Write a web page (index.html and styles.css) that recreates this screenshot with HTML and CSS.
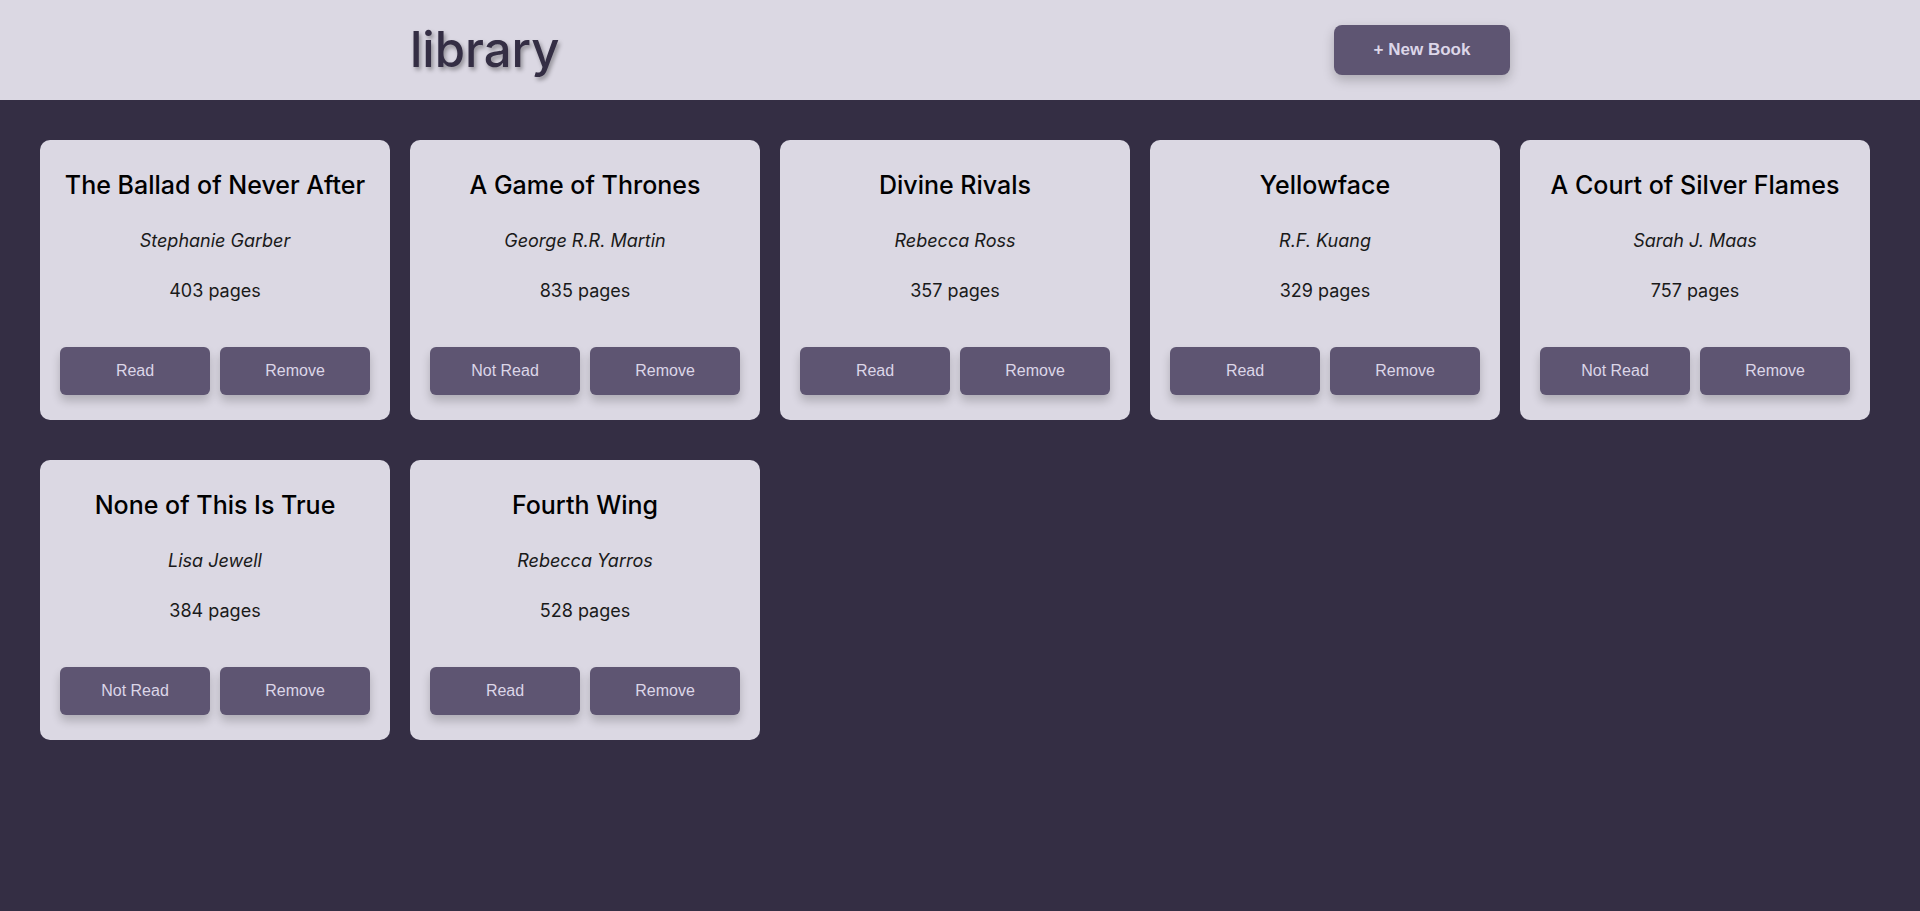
FILE: index.html
```html
<!DOCTYPE html>
<html lang="en">
<head>
<meta charset="utf-8">
<title>Library</title>
<link rel="stylesheet" href="styles.css">
</head>
<body>
<header class="header">
  <div class="header-inner">
    <h1 class="logo">library</h1>
    <button class="new-book">+ New Book</button>
  </div>
</header>
<main class="library">
  <div class="card">
    <h2 class="card-title">The Ballad of Never After</h2>
    <p class="card-author">Stephanie Garber</p>
    <p class="card-pages">403 pages</p>
    <div class="card-actions"><button class="btn">Read</button><button class="btn">Remove</button></div>
  </div>
  <div class="card">
    <h2 class="card-title">A Game of Thrones</h2>
    <p class="card-author">George R.R. Martin</p>
    <p class="card-pages">835 pages</p>
    <div class="card-actions"><button class="btn">Not Read</button><button class="btn">Remove</button></div>
  </div>
  <div class="card">
    <h2 class="card-title">Divine Rivals</h2>
    <p class="card-author">Rebecca Ross</p>
    <p class="card-pages">357 pages</p>
    <div class="card-actions"><button class="btn">Read</button><button class="btn">Remove</button></div>
  </div>
  <div class="card">
    <h2 class="card-title">Yellowface</h2>
    <p class="card-author">R.F. Kuang</p>
    <p class="card-pages">329 pages</p>
    <div class="card-actions"><button class="btn">Read</button><button class="btn">Remove</button></div>
  </div>
  <div class="card">
    <h2 class="card-title">A Court of Silver Flames</h2>
    <p class="card-author">Sarah J. Maas</p>
    <p class="card-pages">757 pages</p>
    <div class="card-actions"><button class="btn">Not Read</button><button class="btn">Remove</button></div>
  </div>
  <div class="card">
    <h2 class="card-title">None of This Is True</h2>
    <p class="card-author">Lisa Jewell</p>
    <p class="card-pages">384 pages</p>
    <div class="card-actions"><button class="btn">Not Read</button><button class="btn">Remove</button></div>
  </div>
  <div class="card">
    <h2 class="card-title">Fourth Wing</h2>
    <p class="card-author">Rebecca Yarros</p>
    <p class="card-pages">528 pages</p>
    <div class="card-actions"><button class="btn">Read</button><button class="btn">Remove</button></div>
  </div>
</main>
</body>
</html>
```
FILE: styles.css
```css
* { box-sizing: border-box; }
html, body { margin: 0; padding: 0; }
body {
  background: #342e44;
  font-family: Inter, "Noto Sans", sans-serif;
  min-height: 911px;
}
.header {
  background: #dbd8e3;
  height: 100px;
}
.header-inner {
  max-width: 1100px;
  height: 100%;
  margin: 0 auto;
  display: flex;
  align-items: center;
  justify-content: space-between;
}
.logo {
  margin: 0;
  font-family: Inter, sans-serif;
  font-size: 49px;
  font-weight: 500;
  color: #342e44;
  line-height: 58px;
  text-shadow: 2px 3px 4px rgba(0, 0, 0, 0.35);
}
.new-book {
  width: 176px;
  height: 50px;
  border: none;
  border-radius: 8px;
  background: #5e5572;
  color: #dcd6e8;
  font-family: "Liberation Sans", Arial, sans-serif;
  font-weight: bold;
  font-size: 17px;
  box-shadow: 0 5px 12px rgba(0, 0, 0, 0.22);
}
.library {
  padding: 40px;
  display: grid;
  grid-template-columns: repeat(auto-fill, 350px);
  column-gap: 20px;
  row-gap: 40px;
}
.card {
  height: 280px;
  background: #dbd8e3;
  border-radius: 10px;
  padding: 20px 20px 25px;
  display: flex;
  flex-direction: column;
  align-items: center;
  text-align: center;
  color: #000;
}
.card-title {
  margin: 10px 0 0;
  font-size: 25px;
  font-weight: 500;
  line-height: 30px;
  white-space: nowrap;
}
.card-author {
  margin: 30px 0 0;
  font-size: 18px;
  font-style: italic;
  line-height: 22px;
  color: #1a1a1a;
}
.card-pages {
  margin: 28px 0 0;
  font-size: 18px;
  line-height: 22px;
  color: #1a1a1a;
}
.card-actions {
  margin-top: auto;
  width: 100%;
  display: flex;
  gap: 10px;
}
.btn {
  flex: 1;
  height: 48px;
  border: none;
  border-radius: 6px;
  background: #5e5572;
  color: #dcd6e8;
  font-family: "Liberation Sans", Arial, sans-serif;
  font-size: 16px;
  box-shadow: 0 6px 10px rgba(0, 0, 0, 0.2);
}
```
